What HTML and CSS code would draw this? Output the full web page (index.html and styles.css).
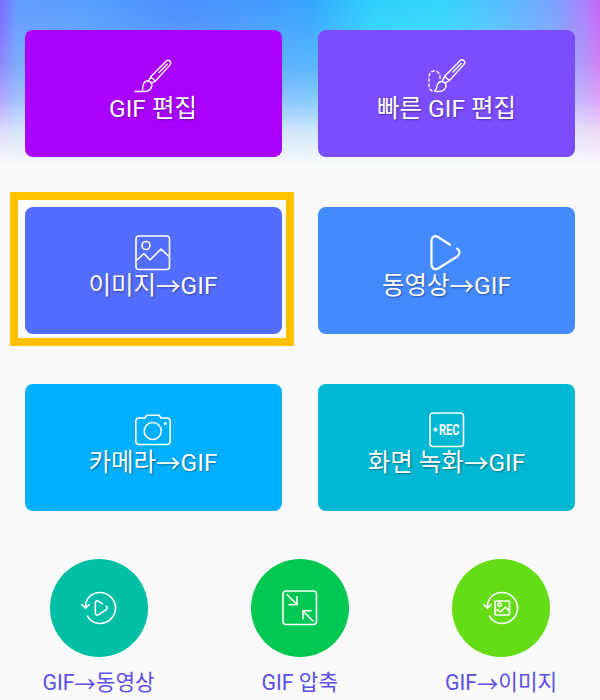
FILE: index.html
```
<!DOCTYPE html>
<html lang="ko">
<head>
<meta charset="UTF-8">
<meta name="viewport" content="width=device-width, initial-scale=1.0">
<title>GIF 편집</title>
<link rel="stylesheet" href="styles.css">
</head>
<body>
<main class="home">
    <div class="cards">
        <a class="card edit">
            <svg class="icon brush" viewBox="0 0 36 36">
                <path d="M0 33.500H9c4 0 7-2 7.800-5.500.4-2-.6-3.700-2.400-4.600-2.700-1-4.800.1-5.900 2.500-.8 2-.7 4.900-1.300 7.500"/>
                <path d="M13.300 23.500l2.200-4.500L31 3.200c2.600-2.300 6.200.8 4 3.700L20.500 23l-4.300 2.300M15.500 19l5 4M24 14.500l8.300-8.600"/>
            </svg>
            <span>GIF 편집</span>
        </a>
        <a class="card quick">
            <svg class="icon brush" viewBox="0 0 36 36">
                <path d="M5.500 33c2.500-1.200 1.700-4 3-6.500 1.200-2.500 3.400-3.700 6-2.500 2.300 1 3.200 3 2.200 5.200-1.500 3.300-5 5.300-11.200 3.800z"/>
                <path d="M13.200 23.300l2.300-4.800L31 2.700c2.600-2.300 6.200.8 4 3.700L20.500 22.500l-4.300 2.500M15.500 18.500l5 4M24 14l8.300-8.600"/>
                <path class="dashed" d="M3 33C0 31 0 28 0 25.500v-6.500c0-8 11-8 11 0v4"/>
            </svg>
            <span>빠른 GIF 편집</span>
        </a>
        <a class="card image selected">
            <svg class="icon" viewBox="0 0 36 36">
                <rect x="1" y="1" width="33.500" height="33.500" rx="3"/>
                <circle cx="11" cy="10.500" r="4"/>
                <path d="M1.500 25.500l7.500-7 6 6.500 11-11 8.500 8"/>
            </svg>
            <span>이미지<i>→</i>GIF</span>
        </a>
        <a class="card video">
            <svg class="icon play" viewBox="0 0 36 36">
                <path d="M21 9.700L9.500 2.300C5.500-.2 2.500 2 2.500 5.500v24c0 4 3.500 6 7 3.800l17.500-11c4.500-3 4.500-6.300 1.200-8.600"/>
            </svg>
            <span>동영상<i>→</i>GIF</span>
        </a>
        <a class="card camera">
            <svg class="icon" viewBox="0 0 36 36">
                <path d="M4.500 6H10l1.800-2.700h12.400L26 6h5.500c2.400 0 3.700 1.300 3.700 3.500v19.500c0 2.200-1.300 3.500-3.700 3.500h-27C2.100 32.500.8 31.200.8 29V9.500C.8 7.300 2.100 6 4.500 6z"/>
                <circle cx="17.700" cy="19" r="8.500"/>
                <circle class="dot" cx="30.300" cy="11.500" r="1.500"/>
            </svg>
            <span>카메라<i>→</i>GIF</span>
        </a>
        <a class="card record">
            <svg class="icon" viewBox="0 0 36 36">
                <rect x="1" y="1" width="33.500" height="33.500" rx="3"/>
                <circle class="dot" cx="6.500" cy="17.700" r="1.900"/>
                <text x="10" y="23" textLength="20.500" lengthAdjust="spacingAndGlyphs">REC</text>
            </svg>
            <span>화면 녹화<i>→</i>GIF</span>
        </a>
    </div>

    <div class="tools">
        <a class="tool to-video">
            <div class="circle">
                <svg class="icon" viewBox="0 0 36 36">
                    <path d="M4.500 17.500C4 9 10.500 2.500 19 2.500s15.500 7 15.500 15.500S27.500 33.500 19 33.500c-5.500 0-10-2.800-12.500-7.300M.8 14.700l3.700 3.500 3.700-3.500"/>
                    <path d="M21.500 13.700l-4-2.500c-1.700-1-3.200-.3-3.200 1.700v10c0 2 1.500 2.700 3.200 1.700l7.500-4.700c1.500-1 1.500-2.600.2-3.700"/>
                </svg>
            </div>
            <span>GIF<i>→</i>동영상</span>
        </a>
        <a class="tool compress">
            <div class="circle">
                <svg class="icon" viewBox="0 0 36 36">
                    <rect x="1" y="1" width="33.500" height="33.500" rx="3"/>
                    <path d="M5 4.500L15 14.500M7 14.700h8V6.700M31 31L21 21M29 20.700h-8v8"/>
                </svg>
            </div>
            <span>GIF 압축</span>
        </a>
        <a class="tool to-image">
            <div class="circle">
                <svg class="icon" viewBox="0 0 36 36">
                    <path d="M4.500 17.500C4 9 10.500 2.500 19 2.500s15.500 7 15.500 15.500S27.500 33.500 19 33.500c-5.500 0-10-2.800-12.500-7.300M.8 14.700l3.700 3.500 3.700-3.500"/>
                    <rect x="12" y="11" width="14.500" height="14" rx="1"/>
                    <circle cx="16.500" cy="14.500" r="1.700"/>
                    <path d="M12 21.500l2.500-2 3 2.500 5-5 4 4"/>
                </svg>
            </div>
            <span>GIF<i>→</i>이미지</span>
        </a>
    </div>
</main>
</body>
</html>
```
FILE: styles.css
```
* {
    box-sizing: border-box;
}

body {
    margin: 0;
    font-family: Roboto, "Noto Sans CJK KR", sans-serif;
    background-color: #fafafa;
}

.home {
    isolation: isolate;
    height: 700px;
    padding: 30px 25px 0 24.500px;
    background-image:
        linear-gradient(to bottom, rgba(250, 250, 250, 0) 0, rgba(250, 250, 250, 0.06) 25px, rgba(250, 250, 250, 0.18) 65px, rgba(250, 250, 250, 0.42) 100px, rgba(250, 250, 250, 0.78) 132px, #fafafa 166px),
        linear-gradient(to right, #7c6cff 0, #629cff 18px, #559fff 90px, #4a8fff 180px, #4599ff 250px, #36a6ff 310px, #2cd2fc 375px, #32d6fc 440px, #55bfff 500px, #7ba2ff 555px, #a880fa 585px, #c866f4 600px);
    background-size: 100% 170px;
    background-repeat: no-repeat;
}

.cards {
    display: grid;
    grid-template-columns: 257px 257px;
    grid-auto-rows: 127px;
    column-gap: 36.500px;
    row-gap: 50px;
}

.card {
    position: relative;
    display: flex;
    flex-direction: column;
    align-items: center;
    padding-top: 28px;
    border-radius: 8px;
    color: #fff;
    font-size: 24.500px;
    line-height: 30px;
    white-space: nowrap;
    text-shadow: 1px 1px 2px rgba(0, 0, 0, 0.4);
}

.icon {
    flex: none;
    width: 36px;
    height: 36px;
    overflow: visible;
    fill: none;
    stroke: #fff;
    stroke-width: 1.600;
    stroke-linecap: round;
    stroke-linejoin: round;
}

.icon.brush {
    stroke-width: 1.400;
}

.icon .dashed {
    stroke-dasharray: 2.500 2.800;
}

.icon .dot {
    fill: #fff;
    stroke: none;
}

.icon text {
    fill: #fff;
    stroke: none;
    font-size: 15px;
    font-weight: 700;
    text-shadow: none;
}

.icon.play {
    stroke-width: 2.200;
}

/* centre the arrow on the latin capitals */
i {
    font-style: normal;
    line-height: 1;
    vertical-align: -2px;
}

.edit { background-color: #aa00ff; }
.quick { background-color: #7c4dff; }
.image { background-color: #536dfe; }
.video { background-color: #448aff; }
.camera { background-color: #00b0ff; }
.record { background-color: #00b8d4; }

/* yellow frame around the chosen card */
.selected::before {
    content: "";
    position: absolute;
    z-index: -1;
    inset: -15px -12px -12px -14.500px;
    border: 8px solid #ffc000;
    background-color: #fff;
}

.tools {
    display: flex;
    justify-content: space-between;
    margin-top: 48px;
}

.tool {
    display: flex;
    flex-direction: column;
    align-items: center;
    width: 148px;
    color: #5b4ee6;
    font-size: 21.300px;
    line-height: 28px;
    white-space: nowrap;
}

.circle {
    display: flex;
    align-items: center;
    justify-content: center;
    width: 98px;
    height: 98px;
    margin-bottom: 12px;
    border-radius: 50%;
}

.to-video .circle { background-color: #00bfa5; }
.compress .circle { background-color: #00c853; }
.to-image .circle { background-color: #64dd17; }
```
